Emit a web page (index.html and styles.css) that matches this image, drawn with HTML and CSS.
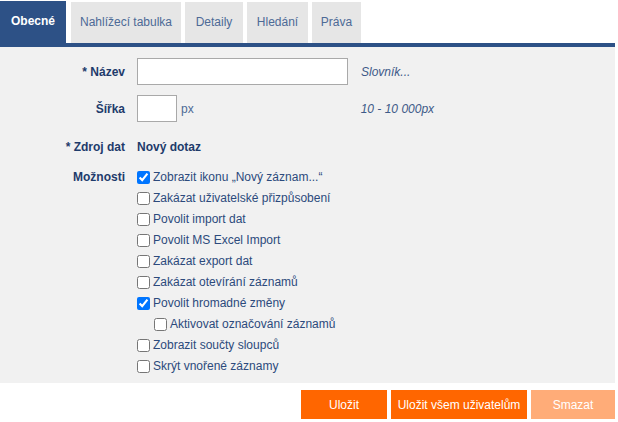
FILE: index.html
```html
<!DOCTYPE html>
<html lang="cs">
<head>
    <meta charset="UTF-8">
    <title>Obecné</title>
    <link rel="stylesheet" href="styles.css">
</head>
<body>
<div class="page">
    <ul class="tabs">
        <li class="select t1">Obecné</li>
        <li class="t2">Nahlížecí tabulka</li>
        <li class="t3">Detaily</li>
        <li class="t4">Hledání</li>
        <li class="t5">Práva</li>
    </ul>
    <div class="panel">
        <div class="row row-input">
            <label class="label">* Název</label>
            <div class="field">
                <input type="text" class="text wide">
                <span class="hint">Slovník...</span>
            </div>
        </div>
        <div class="row row-input row-gap">
            <label class="label">Šířka</label>
            <div class="field">
                <input type="text" class="text small">
                <span class="unit">px</span>
                <span class="hint hint-far">10 - 10 000px</span>
            </div>
        </div>
        <div class="row row-text">
            <label class="label">* Zdroj dat</label>
            <div class="field value">Nový dotaz</div>
        </div>
        <div class="row row-options">
            <label class="label">Možnosti</label>
            <ul class="options">
                <li><label><input type="checkbox" checked>Zobrazit ikonu „Nový záznam...“</label></li>
                <li><label><input type="checkbox">Zakázat uživatelské přizpůsobení</label></li>
                <li><label><input type="checkbox">Povolit import dat</label></li>
                <li><label><input type="checkbox">Povolit MS Excel Import</label></li>
                <li><label><input type="checkbox">Zakázat export dat</label></li>
                <li><label><input type="checkbox">Zakázat otevírání záznamů</label></li>
                <li><label><input type="checkbox" checked>Povolit hromadné změny</label></li>
                <li class="sub"><label><input type="checkbox">Aktivovat označování záznamů</label></li>
                <li><label><input type="checkbox">Zobrazit součty sloupců</label></li>
                <li><label><input type="checkbox">Skrýt vnořené záznamy</label></li>
            </ul>
        </div>
    </div>
    <div class="actions">
        <button class="btn">Uložit</button>
        <button class="btn btn-wide">Uložit všem uživatelům</button>
        <button class="btn btn-off">Smazat</button>
    </div>
</div>
</body>
</html>
```

FILE: styles.css
```css
* {
    margin: 0;
    padding: 0;
    box-sizing: border-box;
    font-family: "Liberation Sans", Arial, sans-serif;
    font-size: 12px;
}

body {
    background: #fff;
}

ul li {
    list-style: none;
}

.page {
    width: 615px;
}

/* zalozky */
.tabs {
    display: flex;
    align-items: flex-end;
    gap: 4px;
    height: 47px;
    border-bottom: 4px solid #2d5186;
}

.tabs li {
    height: 41px;
    line-height: 41px;
    text-align: center;
    background: #e6e6e6;
    color: #4d6a96;
    cursor: pointer;
}

.tabs .t1 { width: 66px; }
.tabs .t2 { width: 110px; margin-left: 1px; }
.tabs .t3 { width: 58px; }
.tabs .t4 { width: 61px; }
.tabs .t5 { width: 49px; }

.tabs li.select {
    height: 42px;
    background: #2d5186;
    color: #fff;
    font-weight: bold;
}

/* formular */
.panel {
    background: #f1f1f1;
    height: 336px;
    padding-top: 11px;
    color: #213f6e;
}

.row {
    display: grid;
    grid-template-columns: 125px 1fr;
    column-gap: 12px;
    align-items: center;
}

.row-input {
    height: 27px;
}

.row-gap {
    margin-top: 10px;
}

.row-text {
    height: 20px;
    margin-top: 15px;
}

.row-options {
    margin-top: 10px;
    align-items: start;
}

.label {
    text-align: right;
    font-weight: bold;
    color: #1e3b6b;
}

.row-options .label {
    line-height: 21px;
}

.field {
    display: flex;
    align-items: center;
}

.value {
    font-weight: bold;
    color: #1e3b6b;
}

.text {
    height: 27px;
    border: 1px solid #a9a9a9;
    background: #fff;
    outline: none;
}

.wide {
    width: 211px;
}

.small {
    width: 40px;
}

.unit {
    margin-left: 4px;
    color: #4d6a96;
}

.hint {
    margin-left: 13px;
    font-style: italic;
    color: #3d5a88;
}

.hint-far {
    margin-left: 167px;
}

.options li {
    height: 21px;
    line-height: 21px;
    color: #2c4a7c;
}

.options label {
    display: flex;
    align-items: center;
}

.options input {
    width: 13px;
    height: 13px;
    margin: 0 3px 0 0;
}

.options li.sub {
    padding-left: 17px;
}

/* tlacitka */
.actions {
    display: flex;
    justify-content: flex-end;
    gap: 4px;
    padding-top: 7px;
}

.btn {
    height: 29px;
    width: 86px;
    border: 0;
    background: #ff6600;
    color: #fff;
    cursor: pointer;
}

.btn-wide {
    width: 136px;
}

.btn-off {
    width: 84px;
    background: #ffac78;
}
```
